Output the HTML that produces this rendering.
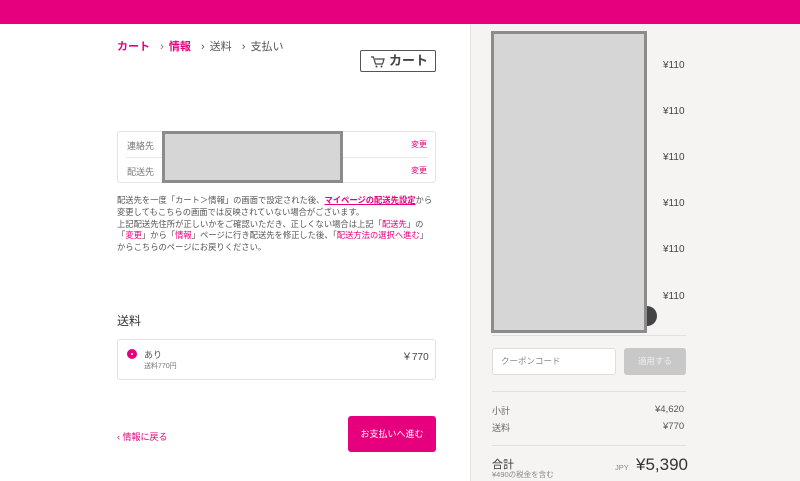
<!DOCTYPE html>
<html><head><meta charset="utf-8"><style>
*{margin:0;padding:0;box-sizing:border-box}
body{width:800px;height:481px;overflow:hidden;background:#fff;font-family:"Liberation Sans","Noto Sans CJK JP",sans-serif;color:#333;position:relative}
.a{position:absolute}
.pk{color:#e6007e}
</style></head><body>
<div class="a" style="left:0;top:0;width:800px;height:24px;background:#e6007e"></div>
<div class="a" style="left:470px;top:24px;width:330px;height:457px;background:#f5f4f2;border-left:1px solid #e2e0dc"></div>

<div class="a" style="left:117px;top:38px;font-size:11px;font-weight:bold;white-space:nowrap;word-spacing:2px"><span class="pk">カート</span><span style="color:#777;font-weight:normal"> &nbsp;› </span><span class="pk">情報</span><span style="color:#555;font-weight:normal"> &nbsp;› 送料 &nbsp;› 支払い</span></div>
<div class="a" style="left:360px;top:50px;width:76px;height:22px;border:1px solid #555;border-radius:2px;font-size:13px;font-weight:bold;color:#444;line-height:20px;padding-left:28px">カート
<svg class="a" style="left:10px;top:5px" width="14" height="12" viewBox="0 0 14 12"><path d="M0 1h2.5l2 7h7l1.5-5H4" fill="none" stroke="#444" stroke-width="1.2"/><circle cx="5.5" cy="10.5" r="1" fill="#444"/><circle cx="10.5" cy="10.5" r="1" fill="#444"/></svg></div>

<div class="a" style="left:117px;top:131px;width:319px;height:52px;border:1px solid #e4e4e4;border-radius:3px"></div>
<div class="a" style="left:126px;top:157px;width:302px;height:1px;background:#e8e8e8"></div>
<div class="a" style="left:127px;top:139px;font-size:9px;color:#777">連絡先</div>
<div class="a" style="left:127px;top:165px;font-size:9px;color:#777">配送先</div>
<div class="a pk" style="left:411px;top:139px;font-size:8px">変更</div>
<div class="a pk" style="left:411px;top:165px;font-size:8px">変更</div>
<div class="a" style="left:162px;top:131px;width:181px;height:52px;background:#d6d6d6;border:3px solid #8b8b8b"></div>

<div class="a" style="left:117px;top:195px;font-size:8.3px;line-height:11.8px;color:#555;white-space:nowrap">配送先を一度「カート＞情報」の画面で設定された後、<b class="pk" style="text-decoration:underline">マイページの配送先設定</b>から<br>変更してもこちらの画面では反映されていない場合がございます。<br>上記配送先住所が正しいかをご確認いただき、正しくない場合は上記「<span class="pk">配送先</span>」の<br>「<span class="pk">変更</span>」から「<span class="pk">情報</span>」ページに行き配送先を修正した後、「<span class="pk">配送方法の選択へ進む</span>」<br>からこちらのページにお戻りください。</div>

<div class="a" style="left:117px;top:312px;font-size:12px;color:#333">送料</div>
<div class="a" style="left:117px;top:339px;width:319px;height:41px;border:1px solid #e2e2e2;border-radius:3px"></div>
<div class="a" style="left:127px;top:349px;width:10px;height:10px;border-radius:50%;background:#e6007e"></div>
<div class="a" style="left:131px;top:353px;width:2px;height:2px;border-radius:50%;background:#fff"></div>
<div class="a" style="left:144px;top:348px;font-size:9px;color:#555">あり</div>
<div class="a" style="left:144px;top:361px;font-size:7px;color:#777">送料770円</div>
<div class="a" style="left:402px;top:348px;font-size:10px;color:#444">￥770</div>

<div class="a pk" style="left:117px;top:430px;font-size:9px">‹ 情報に戻る</div>
<div class="a" style="left:348px;top:416px;width:88px;height:36px;background:#e6007e;border-radius:3px;color:#fff;font-size:9px;line-height:36px;text-align:center">お支払いへ進む</div>

<div class="a" style="left:637px;top:306px;width:20px;height:20px;border-radius:50%;background:#444"></div>
<div class="a" style="left:491px;top:31px;width:156px;height:302px;background:#d6d6d6;border:3px solid #8b8b8b"></div>
<div class="a" style="left:663px;top:60px;font-size:10px;color:#444;line-height:12px">¥110</div>
<div class="a" style="left:663px;top:106px;font-size:10px;color:#444;line-height:12px">¥110</div>
<div class="a" style="left:663px;top:152px;font-size:10px;color:#444;line-height:12px">¥110</div>
<div class="a" style="left:663px;top:198px;font-size:10px;color:#444;line-height:12px">¥110</div>
<div class="a" style="left:663px;top:244px;font-size:10px;color:#444;line-height:12px">¥110</div>
<div class="a" style="left:663px;top:291px;font-size:10px;color:#444;line-height:12px">¥110</div>
<div class="a" style="left:492px;top:335px;width:194px;height:1px;background:#e2e0dc"></div>
<div class="a" style="left:492px;top:348px;width:124px;height:27px;background:#fff;border:1px solid #ddd;border-radius:3px;font-size:8.5px;color:#888;line-height:25px;padding-left:8px">クーポンコード</div>
<div class="a" style="left:624px;top:348px;width:62px;height:27px;background:#c8c8c8;border-radius:3px;font-size:8.5px;color:#eee;line-height:27px;text-align:center">適用する</div>
<div class="a" style="left:492px;top:391px;width:194px;height:1px;background:#e2e0dc"></div>
<div class="a" style="left:492px;top:404px;font-size:9px;color:#666">小計</div>
<div class="a" style="left:655px;top:404px;font-size:9.5px;color:#555">¥4,620</div>
<div class="a" style="left:492px;top:421px;font-size:9px;color:#666">送料</div>
<div class="a" style="left:663px;top:421px;font-size:9.5px;color:#555">¥770</div>
<div class="a" style="left:492px;top:445px;width:194px;height:1px;background:#e2e0dc"></div>
<div class="a" style="left:492px;top:456px;font-size:11px;color:#333">合計</div>
<div class="a" style="left:492px;top:469px;font-size:7.5px;color:#888">¥490の税金を含む</div>
<div class="a" style="left:615px;top:463px;font-size:7.5px;color:#888">JPY</div>
<div class="a" style="left:636px;top:455px;font-size:17px;color:#333">¥5,390</div>
</body></html>
